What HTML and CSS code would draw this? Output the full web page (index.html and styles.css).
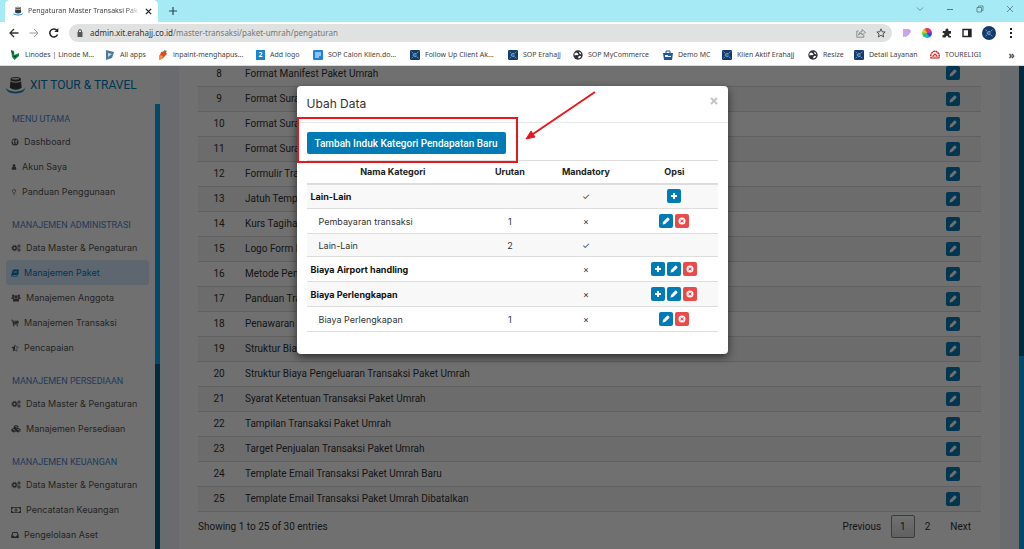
FILE: index.html
```html
<!DOCTYPE html>
<html lang="id">
<head>
<meta charset="utf-8">
<title>Pengaturan Master Transaksi Paket Umrah</title>
<link rel="stylesheet" href="styles.css">
</head>
<body>
<svg class="sprite" aria-hidden="true">
  <symbol id="i-plus" viewBox="0 0 16 16"><path d="M6 2h4v4h4v4h-4v4H6v-4H2V6h4z"/></symbol>
  <symbol id="i-pencil" viewBox="0 0 16 16"><path d="M1 15l1-5.200L10.200 1.600q1.300-1.200 2.600 0l1.600 1.600q1.200 1.300 0 2.600L6.200 14z"/></symbol>
  <symbol id="i-remove" viewBox="0 0 16 16"><path fill-rule="evenodd" d="M8 1a7 7 0 1 0 0 14A7 7 0 0 0 8 1zM5.800 4.300L8 6.500l2.200-2.200 1.500 1.500L9.500 8l2.200 2.200-1.500 1.500L8 9.500l-2.200 2.200-1.500-1.500L6.500 8 4.300 5.800z"/></symbol>
  <symbol id="i-globe" viewBox="0 0 16 16"><path fill-rule="evenodd" d="M8 1a7 7 0 1 0 0 14A7 7 0 0 0 8 1zM3 5l2.500-2 2 .5L6 5.500 7 7 5 8.500 7 10.500 6.500 13 4.500 11.500 4 9 2.500 7.500zM10 3l2.500 1.500L13.500 7 12 6.500 10.500 8 12 9.500 11.500 11.500 10 12.500 9 10 8.500 6.500z"/></symbol>
  <symbol id="i-user" viewBox="0 0 16 16"><circle cx="8" cy="4.500" r="3.800"/><path d="M2 15V12q0-4 3-4.500 3 2 6 0 3 .5 3 4.500v3z"/></symbol>
  <symbol id="i-bulb" viewBox="0 0 16 16"><path fill="none" stroke="currentColor" stroke-width="1.500" d="M6 11q0-1.500-1.300-2.800a4.500 4.500 0 1 1 6.600 0Q10 9.500 10 11zM6 13h4M7 15h2M8 3.500q2 0 2 1.800"/></symbol>
  <symbol id="i-cogs" viewBox="0 0 20 16"><circle cx="7" cy="8" r="3.500" fill="none" stroke="currentColor" stroke-width="2.600"/><circle cx="7" cy="8" r="5.600" fill="none" stroke="currentColor" stroke-width="1.800" stroke-dasharray="2.200"/><circle cx="16" cy="4" r="2" fill="none" stroke="currentColor" stroke-width="1.800"/><circle cx="16" cy="4" r="3.200" fill="none" stroke="currentColor" stroke-dasharray="1.300"/><circle cx="16" cy="12" r="2" fill="none" stroke="currentColor" stroke-width="1.800"/><circle cx="16" cy="12" r="3.200" fill="none" stroke="currentColor" stroke-dasharray="1.300"/></symbol>
  <symbol id="i-book" viewBox="0 0 16 16"><path fill-rule="evenodd" d="M5 1h10q1 .5.700 1.500L13 11q-.5 1-1.500 1H3q-1 .7 0 1.500h9.500L15.300 5q1 .5.500 1.800L13.500 14q-.5 1-1.500 1H2.500Q0 14.500.500 12L3.500 2.500Q4 1 5 1zM6 4l-.3 1H12l.3-1zM5.300 6.500L5 7.500h6.300l.3-1z"/></symbol>
  <symbol id="i-users" viewBox="0 0 20 16"><circle cx="4.500" cy="3.500" r="2.500"/><circle cx="15.500" cy="3.500" r="2.500"/><circle cx="10" cy="6" r="3.300"/><path d="M4 15v-2.500Q4 9 6.500 9q3.500 2 7 0Q16 9 16 12.500V15zM1 10V8q0-2 2-2h2.500q0 2 1 3L4 10zM19 10V8q0-2-2-2h-2.500q0 2-1 3l2.500 1z"/></symbol>
  <symbol id="i-cart" viewBox="0 0 17 16"><path fill-rule="evenodd" d="M0 1h3.500l.5 2h12v6L5.500 10l.3 1.200H15v1.300H4.300L2.500 2.500H0zM6 4.500v1h2v-1zM9.500 4.500v1h2v-1zM6.500 7v1h2V7z"/><circle cx="6" cy="14" r="1.500"/><circle cx="13.500" cy="14" r="1.500"/></symbol>
  <symbol id="i-star" viewBox="0 0 16 16"><path fill="none" stroke="currentColor" stroke-width="1.200" d="M8 1.500l2 4.300 4.800.6-3.500 3.300.9 4.800L8 12.200"/><path d="M8 .8v11.600l-4.500 2.500.9-5.100L.7 6.200l5-.7z"/></symbol>
  <symbol id="i-cubes" viewBox="0 0 20 16"><path fill-rule="evenodd" d="M10 0l4.500 1.800v4.400L19 8v4.500L14.500 15 10 13l-4.500 2L1 12.500V8l4.500-1.800V1.800zM7.500 2.500L10 3.500l2.500-1L10 1.500zM10.800 4.800v2l2.200-1V4zM3 9l2.500 1L8 9l-2.500-1zM6.300 11.200v2l2.200-1v-1.800zM12 9l2.500 1L17 9l-2.500-1zM15.300 11.200v2l2.200-1v-1.800z"/></symbol>
  <symbol id="i-money" viewBox="0 0 20 16"><path fill-rule="evenodd" d="M0 2h20v12H0zM4 3.500Q4 6 1.500 6v4Q4 10 4 12.500h12q0-2.500 2.500-2.500V6Q16 6 16 3.500z"/><path d="M10 4.500a3 3.500 0 1 0 0 7 3 3.500 0 0 0 0-7zm-.5 1.500h1.200v4H9.300V7.500H8.500z" fill-rule="evenodd"/></symbol>
  <symbol id="i-inbox" viewBox="0 0 16 16"><path fill-rule="evenodd" d="M4 2h8q1 0 1.300 1L15.500 9v4q0 1-1 1h-13q-1 0-1-1V9L2.700 3Q3 2 4 2zm.5 2L2.700 9H5l1 2h4l1-2h2.300L11.500 4z"/></symbol>
  <symbol id="i-kaaba" viewBox="0 0 20 18"><path fill="#3a3a3c" d="M5 1.500Q10-.5 15.500 1.500L16.500 12Q10 16 4 12z"/><path fill="#d9d9d9" d="M4.500 4Q10 6.500 16 4v1.300Q10 8 4.500 5.300zM6 2q4-1.200 8 0v1q-4 1-8 0z"/><path fill="#0b86c3" d="M0 12q2 4 10 4t10-4q0 6-10 6T0 12z"/></symbol>
  <symbol id="i-erahajj" viewBox="0 0 16 16"><rect width="16" height="16" rx="2" fill="#123b6b"/><path fill="none" stroke="#9cc3e6" stroke-width="1.200" d="M10.500 5.500H7q-2 .5-2 2.500t2 2.500h3.500M6.500 8H11M2.500 3l2 1.500M13.500 3l-2 1.500M2.500 13l2-1.500M13.500 13l-2-1.500"/></symbol>
  <symbol id="i-world" viewBox="0 0 16 16"><circle cx="8" cy="8" r="7.500" fill="#2d3034"/><path fill="#fff" d="M2 6l3-2 2.500 1L9 7l-2 1.500-2.500-.5L3 9zM9 2.500l3.500 1.800L13.500 7 11 6.500zM8 11l2.500-2 2.500.8-1.500 2.500L9 13.500z"/></symbol>
</svg>

<header class="browser">
  <div class="tabs">
    <div class="tab"><svg class="ico10"><use href="#i-kaaba"/></svg><span class="tab-title">Pengaturan Master Transaksi Pak</span>
      <button class="bare" aria-label="Tutup tab"><svg class="ico6" viewBox="0 0 8 8"><path d="M1 1l6 6M7 1L1 7" stroke="#222" stroke-width="1.500"/></svg></button></div>
    <button class="bare new-tab" aria-label="Tab baru"><svg class="ico8" viewBox="0 0 8 8"><path d="M4 0v8M0 4h8" stroke="#33474b" stroke-width="1.200"/></svg></button>
    <div class="window-buttons">
      <button class="bare" aria-label="Cari tab"><svg class="ico8" viewBox="0 0 8 8"><path d="M1 2.500l3 3 3-3" fill="none" stroke="#6b969c"/></svg></button>
      <button class="bare" aria-label="Kecilkan"><svg class="ico8" viewBox="0 0 8 8"><path d="M1 4.500h6" stroke="#55797e"/></svg></button>
      <button class="bare" aria-label="Pulihkan"><svg class="ico8" viewBox="0 0 8 8"><path d="M1 2.500h4.500V7H1zM2.500 2.500V1H7v4.500H5.500" fill="none" stroke="#55797e" stroke-width=".8"/></svg></button>
      <button class="bare" aria-label="Tutup"><svg class="ico8" viewBox="0 0 8 8"><path d="M1 1l6 6M7 1L1 7" stroke="#55797e" stroke-width=".8"/></svg></button>
    </div>
  </div>
  <div class="toolbar">
    <button class="bare" aria-label="Kembali"><svg class="ico10" viewBox="0 0 10 10"><path d="M9.500 5H1M5 1L1 5l4 4" fill="none" stroke="#333" stroke-width="1.300"/></svg></button>
    <button class="bare" aria-label="Maju"><svg class="ico10" viewBox="0 0 10 10"><path d="M.5 5H9M5 1l4 4-4 4" fill="none" stroke="#999"/></svg></button>
    <button class="bare" aria-label="Muat ulang"><svg class="ico10" viewBox="0 0 10 10"><path d="M8.500 6.500a4 4 0 1 1-.5-4" fill="none" stroke="#222" stroke-width="1.500"/><path d="M9.300 0v4H5.300z" fill="#222"/></svg></button>
    <div class="address">
      <svg class="ico8" viewBox="0 0 8 8"><path d="M1.500 3h5v5h-5z" fill="#555"/><path d="M2.500 3V2q0-1.400 1.500-1.400T5.500 2v1" fill="none" stroke="#555"/></svg>
      <label class="url"><span class="host">admin.xit.erahajj.co.id</span><input class="url-path" aria-label="Alamat" value="/master-transaksi/paket-umrah/pengaturan"></label>
      <button class="bare" aria-label="Bagikan"><svg class="ico10" viewBox="0 0 10 10"><path d="M2.500 3H.8v6.200h7V7M2.500 7Q3 3.500 6 3.500V1.500L9.500 4.500 6 7V5.300Q4 5 2.500 7z" fill="none" stroke="#777" stroke-width=".8"/></svg></button>
      <button class="bare" aria-label="Tandai"><svg class="ico10" viewBox="0 0 10 10"><path d="M5 .8l1.200 3 3 .2-2.300 2L7.700 9 5 7.300 2.300 9l.8-3L.8 4l3-.2z" fill="none" stroke="#444" stroke-width=".9"/></svg></button>
    </div>
    <div class="extensions">
      <svg class="ico10" viewBox="0 0 10 10"><path d="M1 1h6q2 1 2 3L6 7 4 8 1 9z" fill="#c9a1ef"/><path d="M1 1h3v4H1z" fill="#df9bea"/><path d="M3 9l4-3" stroke="#8ab4ff"/></svg>
      <span class="wheel"></span>
      <svg class="ico10" viewBox="0 0 10 10"><path d="M1 3h2.500Q3 .5 5 .5T6.300 3H9v2.500Q7 5.500 7 6.700T9 8v1.500H6.500Q6 7.700 5 7.700T3.500 9.500H.5V7Q2.500 7 2.500 6T.5 4.700z" fill="#2b2b2b"/></svg>
      <svg class="ico10" viewBox="0 0 10 10"><path d="M1 1.500h8v7H1z" fill="none" stroke="#222" stroke-width="1.400"/><path d="M6 1.500h3v7H6z" fill="#222"/></svg>
      <span class="avatar"><svg class="ico10"><use href="#i-erahajj"/></svg></span>
      <svg class="ico10" viewBox="0 0 10 10"><path d="M4 0h2v2H4zM4 4h2v2H4zM4 8h2v2H4z" fill="#222"/></svg>
    </div>
  </div>
  <nav class="bookmarks" aria-label="Bookmark">
    <a href="#"><svg class="ico10" viewBox="0 0 10 10"><path d="M1 0l3 1 .5 4L9 3v3L4.500 10 2 7z" fill="#178a4c"/><path d="M1 0l1.500 4L4 3zM3 6l2 2 3-3" fill="#0b4a2c"/></svg>Linodes | Linode M...</a>
    <a href="#"><svg class="ico10" viewBox="0 0 10 10"><path d="M1 0l8 2-2 6-6 2z" fill="#4d7896"/><path d="M3 3l4 1-4 3z" fill="#c2d9e8"/></svg>All apps</a>
    <a href="#"><svg class="ico10" viewBox="0 0 10 10"><path d="M3 2l4-1 2 3-5 5-3-1z" fill="#e34b25"/><path d="M1 5l4 1-2 4H1z" fill="#ef9b3b"/><path d="M6 0l3 1-2 2z" fill="#3e8c50"/></svg>inpaint-menghapus...</a>
    <a href="#"><span class="two">2</span>Add logo</a>
    <a href="#"><svg class="ico10" viewBox="0 0 10 10"><rect width="10" height="10" rx="1" fill="#1a83e6"/><path d="M2 3h6M2 5h6M2 7h4" stroke="#fff"/></svg>SOP Calon Klien.do...</a>
    <a href="#"><svg class="ico10"><use href="#i-erahajj"/></svg>Follow Up Client Ak...</a>
    <a href="#"><svg class="ico10"><use href="#i-erahajj"/></svg>SOP Erahajj</a>
    <a href="#"><svg class="ico10"><use href="#i-world"/></svg>SOP MyCommerce</a>
    <a href="#"><svg class="ico10" viewBox="0 0 10 10"><path d="M0 3h10L9 10H1z" fill="#1d55a5"/><path d="M3 3V1h4v2" fill="none" stroke="#1d55a5"/><path d="M2 5h6v2H2z" fill="#e9eef7"/><path d="M5 5h4v1H5z" fill="#d23"/></svg>Demo MC</a>
    <a href="#"><svg class="ico10"><use href="#i-erahajj"/></svg>Klien Aktif Erahajj</a>
    <a href="#"><svg class="ico10"><use href="#i-world"/></svg>Resize</a>
    <a href="#"><svg class="ico10"><use href="#i-erahajj"/></svg>Detail Layanan</a>
    <a href="#"><svg class="ico10" viewBox="0 0 10 10"><path d="M1.500 8.500Q0 6 1.500 3.500T5 1.200t3.500 2.300 0 5" fill="none" stroke="#d4282c" stroke-width="1.500" stroke-dasharray="2 .5"/><path d="M3 9V6l2-2 2 2v3M5 9V6.500" fill="none" stroke="#d4282c" stroke-width="1.200"/></svg>TOURELIGI</a>
    <button class="bare more" aria-label="Bookmark lainnya">»</button>
  </nav>
</header>

<div class="app">
  <aside class="sidebar">
    <a class="brand" href="#"><svg class="brand-logo"><use href="#i-kaaba"/></svg>XIT TOUR &amp; TRAVEL</a>
    <div class="side-body">
      <nav class="menu">
        <h2>MENU UTAMA</h2>
        <a href="#"><svg class="mi"><use href="#i-globe"/></svg>Dashboard</a>
        <a href="#"><svg class="mi narrow"><use href="#i-user"/></svg>Akun Saya</a>
        <a href="#"><svg class="mi narrow"><use href="#i-bulb"/></svg>Panduan Penggunaan</a>
        <h2>MANAJEMEN ADMINISTRASI</h2>
        <a href="#"><svg class="mi wide"><use href="#i-cogs"/></svg>Data Master &amp; Pengaturan</a>
        <a href="#" class="current"><svg class="mi"><use href="#i-book"/></svg>Manajemen Paket</a>
        <a href="#"><svg class="mi wide"><use href="#i-users"/></svg>Manajemen Anggota</a>
        <a href="#"><svg class="mi"><use href="#i-cart"/></svg>Manajemen Transaksi</a>
        <a href="#"><svg class="mi"><use href="#i-star"/></svg>Pencapaian</a>
        <h2>MANAJEMEN PERSEDIAAN</h2>
        <a href="#"><svg class="mi wide"><use href="#i-cogs"/></svg>Data Master &amp; Pengaturan</a>
        <a href="#"><svg class="mi wide"><use href="#i-cubes"/></svg>Manajemen Persediaan</a>
        <h2>MANAJEMEN KEUANGAN</h2>
        <a href="#"><svg class="mi wide"><use href="#i-cogs"/></svg>Data Master &amp; Pengaturan</a>
        <a href="#"><svg class="mi wide"><use href="#i-money"/></svg>Pencatatan Keuangan</a>
        <a href="#"><svg class="mi"><use href="#i-inbox"/></svg>Pengelolaan Aset</a>
      </nav>
      <div class="track"><div class="thumb"></div></div>
    </div>
  </aside>
  <main class="content">
    <div class="card">
      <table class="list">
        <tbody>
          <tr><td>8</td><td>Format Manifest Paket Umrah</td><td><button class="sq" aria-label="Ubah"><svg><use href="#i-pencil"/></svg></button></td></tr>
          <tr><td>9</td><td>Format Sura</td><td><button class="sq" aria-label="Ubah"><svg><use href="#i-pencil"/></svg></button></td></tr>
          <tr><td>10</td><td>Format Sura</td><td><button class="sq" aria-label="Ubah"><svg><use href="#i-pencil"/></svg></button></td></tr>
          <tr><td>11</td><td>Format Sura</td><td><button class="sq" aria-label="Ubah"><svg><use href="#i-pencil"/></svg></button></td></tr>
          <tr><td>12</td><td>Formulir Tran</td><td><button class="sq" aria-label="Ubah"><svg><use href="#i-pencil"/></svg></button></td></tr>
          <tr><td>13</td><td>Jatuh Temp</td><td><button class="sq" aria-label="Ubah"><svg><use href="#i-pencil"/></svg></button></td></tr>
          <tr><td>14</td><td>Kurs Tagiha</td><td><button class="sq" aria-label="Ubah"><svg><use href="#i-pencil"/></svg></button></td></tr>
          <tr><td>15</td><td>Logo Form K</td><td><button class="sq" aria-label="Ubah"><svg><use href="#i-pencil"/></svg></button></td></tr>
          <tr><td>16</td><td>Metode Pem</td><td><button class="sq" aria-label="Ubah"><svg><use href="#i-pencil"/></svg></button></td></tr>
          <tr><td>17</td><td>Panduan Tra</td><td><button class="sq" aria-label="Ubah"><svg><use href="#i-pencil"/></svg></button></td></tr>
          <tr><td>18</td><td>Penawaran</td><td><button class="sq" aria-label="Ubah"><svg><use href="#i-pencil"/></svg></button></td></tr>
          <tr><td>19</td><td>Struktur Bia</td><td><button class="sq" aria-label="Ubah"><svg><use href="#i-pencil"/></svg></button></td></tr>
          <tr><td>20</td><td>Struktur Biaya Pengeluaran Transaksi Paket Umrah</td><td><button class="sq" aria-label="Ubah"><svg><use href="#i-pencil"/></svg></button></td></tr>
          <tr><td>21</td><td>Syarat Ketentuan Transaksi Paket Umrah</td><td><button class="sq" aria-label="Ubah"><svg><use href="#i-pencil"/></svg></button></td></tr>
          <tr><td>22</td><td>Tampilan Transaksi Paket Umrah</td><td><button class="sq" aria-label="Ubah"><svg><use href="#i-pencil"/></svg></button></td></tr>
          <tr><td>23</td><td>Target Penjualan Transaksi Paket Umrah</td><td><button class="sq" aria-label="Ubah"><svg><use href="#i-pencil"/></svg></button></td></tr>
          <tr><td>24</td><td>Template Email Transaksi Paket Umrah Baru</td><td><button class="sq" aria-label="Ubah"><svg><use href="#i-pencil"/></svg></button></td></tr>
          <tr><td>25</td><td>Template Email Transaksi Paket Umrah Dibatalkan</td><td><button class="sq" aria-label="Ubah"><svg><use href="#i-pencil"/></svg></button></td></tr>
        </tbody>
      </table>
      <div class="list-foot">
        <span>Showing 1 to 25 of 30 entries</span>
        <div class="pages">
          <button class="page">Previous</button>
          <button class="page on">1</button>
          <button class="page">2</button>
          <button class="page">Next</button>
        </div>
      </div>
    </div>
  </main>
  <div class="track page-track"><div class="thumb"></div></div>

  <div class="overlay">
    <section class="modal" role="dialog" aria-labelledby="modal-title">
      <header class="modal-head">
        <h1 id="modal-title">Ubah Data</h1>
        <button class="bare close" aria-label="Tutup"><svg class="ico8" viewBox="0 0 8 8"><path d="M1 1l6 6M7 1L1 7" stroke="#c4c4c4" stroke-width="2"/></svg></button>
      </header>
      <div class="modal-body">
        <button class="primary">Tambah Induk Kategori Pendapatan Baru</button>
        <table class="cats">
          <thead><tr><th class="c-name">Nama Kategori</th><th class="c-order">Urutan</th><th class="c-man">Mandatory</th><th class="c-opt">Opsi</th></tr></thead>
          <tbody>
            <tr class="parent"><td>Lain-Lain</td><td></td><td>✓</td><td><div class="ops"><button class="sq" aria-label="Tambah"><svg><use href="#i-plus"/></svg></button></div></td></tr>
            <tr><td>Pembayaran transaksi</td><td>1</td><td>×</td><td><div class="ops"><button class="sq" aria-label="Ubah"><svg><use href="#i-pencil"/></svg></button><button class="sq red" aria-label="Hapus"><svg><use href="#i-remove"/></svg></button></div></td></tr>
            <tr class="short"><td>Lain-Lain</td><td>2</td><td>✓</td><td></td></tr>
            <tr class="parent"><td>Biaya Airport handling</td><td></td><td>×</td><td><div class="ops"><button class="sq" aria-label="Tambah"><svg><use href="#i-plus"/></svg></button><button class="sq" aria-label="Ubah"><svg><use href="#i-pencil"/></svg></button><button class="sq red" aria-label="Hapus"><svg><use href="#i-remove"/></svg></button></div></td></tr>
            <tr class="parent"><td>Biaya Perlengkapan</td><td></td><td>×</td><td><div class="ops"><button class="sq" aria-label="Tambah"><svg><use href="#i-plus"/></svg></button><button class="sq" aria-label="Ubah"><svg><use href="#i-pencil"/></svg></button><button class="sq red" aria-label="Hapus"><svg><use href="#i-remove"/></svg></button></div></td></tr>
            <tr><td>Biaya Perlengkapan</td><td>1</td><td>×</td><td><div class="ops"><button class="sq" aria-label="Ubah"><svg><use href="#i-pencil"/></svg></button><button class="sq red" aria-label="Hapus"><svg><use href="#i-remove"/></svg></button></div></td></tr>
          </tbody>
        </table>
      </div>
      <svg class="callout" viewBox="0 0 300 78" aria-hidden="true"><rect x="1" y="32" width="219" height="44" fill="none" stroke="#e8171b" stroke-width="2"/><path d="M298 6L236 48" stroke="#e8171b" stroke-width="2"/><path d="M229 53l5-8 4 6z" fill="#e8171b" stroke="#e8171b"/></svg>
    </section>
  </div>
</div>
</body>
</html>
```
FILE: styles.css
```css
* { box-sizing: border-box; }
body {
  margin: 0;
  height: 100vh;
  display: flex;
  flex-direction: column;
  overflow: hidden;
  font: 10px/15px Roboto, "Open Sans", sans-serif;
  color: #333;
}
a { color: inherit; text-decoration: none; }
button { font: inherit; color: inherit; cursor: pointer; }
.sprite { position: absolute; width: 0; height: 0; }
.bare { display: flex; align-items: center; justify-content: center; padding: 0; border: 0; background: none; }
.ico6 { width: 7px; height: 7px; }
.ico8 { width: 8px; height: 8px; }
.ico10 { width: 10px; height: 10px; flex: none; }

/* Browser frame */
.browser { flex: none; border-bottom: 1px solid #d5dcdd; background: #fff; font: 8px/12px "Noto Sans", sans-serif; color: #444; }
.tabs { display: flex; align-items: center; height: 22px; padding: 0 10px 0 5px; background: #a5eaf4; }
.tab { display: flex; align-items: center; gap: 5px; width: 153px; height: 22px; padding: 0 6px 0 8px; border-radius: 5px 5px 0 0; background: #fff; }
.tab-title { flex: 1; white-space: nowrap; font-size: 7px; -webkit-mask-image: linear-gradient(90deg, #000 88%, transparent); mask-image: linear-gradient(90deg, #000 88%, transparent); }
.new-tab { margin-left: 11px; }
.window-buttons { display: flex; gap: 22px; margin: 0 0 4px auto; }
.toolbar { display: flex; align-items: center; gap: 10px; height: 22px; padding: 0 8px 0 9px; }
.address { flex: 1; display: flex; align-items: center; gap: 10px; height: 18px; padding: 0 6px 0 7px; border-radius: 9px; background: #e0e1e1; }
.url { flex: 1; display: flex; min-width: 0; margin-left: -4px; }
.host { color: #333; }
.url-path { flex: 1; min-width: 0; padding: 0; border: 0; outline: 0; background: none; font: inherit; color: #777; }
.extensions { display: flex; align-items: center; gap: 10px; }
.wheel { width: 10px; height: 10px; border-radius: 50%; background: conic-gradient(#e33, #c3c, #33d, #2bd, #2c4, #dd2, #e33); }
.avatar { display: flex; align-items: center; justify-content: center; width: 14px; height: 14px; border-radius: 50%; background: #123b6b; }
.bookmarks {
  display: grid;
  grid-template-columns: 95fr 53fr 98fr 57fr 97fr 98fr 65fr 90fr 59fr 86fr 46fr 76fr 74fr 15fr;
  align-items: center;
  height: 21px;
  padding: 0 5px 0 10px;
  font-size: 7px;
}
.bookmarks a { display: flex; align-items: center; gap: 5px; min-width: 0; white-space: nowrap; }
.two { width: 9px; height: 10px; background: #1686cf; color: #fff; font-weight: bold; line-height: 10px; text-align: center; }
.more { font-size: 10px; font-weight: bold; }

/* Application */
.app { position: relative; flex: 1; min-height: 0; display: flex; overflow: hidden; background: #eff3fa; }
.sidebar { flex: none; display: flex; flex-direction: column; width: 160px; background: #fff; }
.brand { display: flex; align-items: center; gap: 5px; height: 38px; padding-left: 6px; font-size: 12px; color: #007bb6; }
.brand-logo { width: 19px; height: 18px; }
.side-body { flex: 1; min-height: 0; display: flex; }
.menu { flex: 1; padding: 0 6px; font-family: Inter, sans-serif; font-size: 9px; color: #555; }
.menu h2 { margin: 12px 0 0 6px; font: 9px/19px Roboto, sans-serif; color: #4a86d0; white-space: nowrap; }
.menu h2:first-child { margin-top: 6px; }
.menu a { display: flex; align-items: center; gap: 5px; height: 25px; padding-left: 5px; border-radius: 3px; white-space: nowrap; }
.menu .current { background: #d6e8ff; color: #007bb6; }
.mi { width: 8px; height: 8px; flex: none; fill: currentColor; }
.mi.narrow { width: 6px; }
.mi.wide { width: 10px; }
.track { flex: none; width: 5px; background: #00638f; }
.thumb { background: #00aaf6; }
.side-body .thumb { height: 260px; }
.page-track { display: flex; flex-direction: column; justify-content: flex-end; }
.page-track .thumb { height: 40%; }

.content { flex: 1; min-width: 0; padding: 0 19px; }
.card { height: 100%; padding: 0 19px; overflow: hidden; background: #fff; }
.list { width: 100%; margin-top: -5px; border-collapse: collapse; }
.list td { height: 25px; padding: 0; border-bottom: 1px solid #dadada; vertical-align: middle; }
.list tr:nth-child(even) { background: #f5f5f5; }
.list td:first-child { width: 42px; text-align: center; }
.list td:nth-child(2) { padding-left: 5px; }
.list td:last-child { width: 56px; }
.list .sq { margin: 0 auto; }
.list-foot { display: flex; justify-content: space-between; align-items: center; height: 29px; }
.pages { display: flex; align-items: center; }
.page { height: 23px; padding: 0 9px; border: 1px solid transparent; border-radius: 2px; background: none; }
.page.on { padding: 0 8px; border-color: #888; background: linear-gradient(#fff, #dcdcdc); }

.sq { display: flex; align-items: center; justify-content: center; width: 14px; height: 14px; padding: 0; border: 0; border-radius: 2px; background: #007bb6; color: #fff; }
.sq svg { width: 8px; height: 8px; fill: currentColor; }
.sq.red { background: #ea4a4a; }

/* Dialog */
.overlay { position: absolute; inset: 0; padding-top: 20px; background: rgba(0, 0, 0, .56); }
.modal { position: relative; width: 90%; max-width: 431px; margin: 0 auto; border-radius: 4px; background: #fff; box-shadow: 0 3px 9px rgba(0, 0, 0, .6); }
.modal-head { display: flex; align-items: center; justify-content: space-between; height: 37px; padding: 0 10px; border-bottom: 1px solid #e8e8e8; }
.modal-head h1 { margin: 0; font: 12px/16px Inter, sans-serif; }
.close { margin-bottom: 6px; }
.modal-body { padding: 9px 10px 22px; }
.primary { height: 22px; padding: 0 8px; border: 0; border-radius: 2px; background: #007bb6; color: #fff; font-weight: 500; }
.cats { width: 100%; margin-top: 6px; border-collapse: collapse; table-layout: fixed; border-top: 1px solid #ddd; font-family: Inter, sans-serif; font-size: 9px; }
.cats th { height: 23px; padding: 0; border-bottom: 2px solid #ddd; font-weight: 700; color: #222; }
.c-name { width: 42%; }
.c-order { width: 15%; }
.c-man { width: 22%; }
.cats td { height: 25px; padding: 0; border-bottom: 1px solid #ddd; text-align: center; }
.cats .short td { height: 23px; }
.cats td:first-child { padding-left: 12px; text-align: left; }
.cats .parent td:first-child { padding-left: 4px; font-weight: 700; color: #111; }
.cats tbody tr:nth-child(odd) { background: #f8f8f8; }
.ops { display: flex; justify-content: center; gap: 2px; }
.callout { position: absolute; top: 0; left: 0; width: 300px; height: 78px; pointer-events: none; }
```
